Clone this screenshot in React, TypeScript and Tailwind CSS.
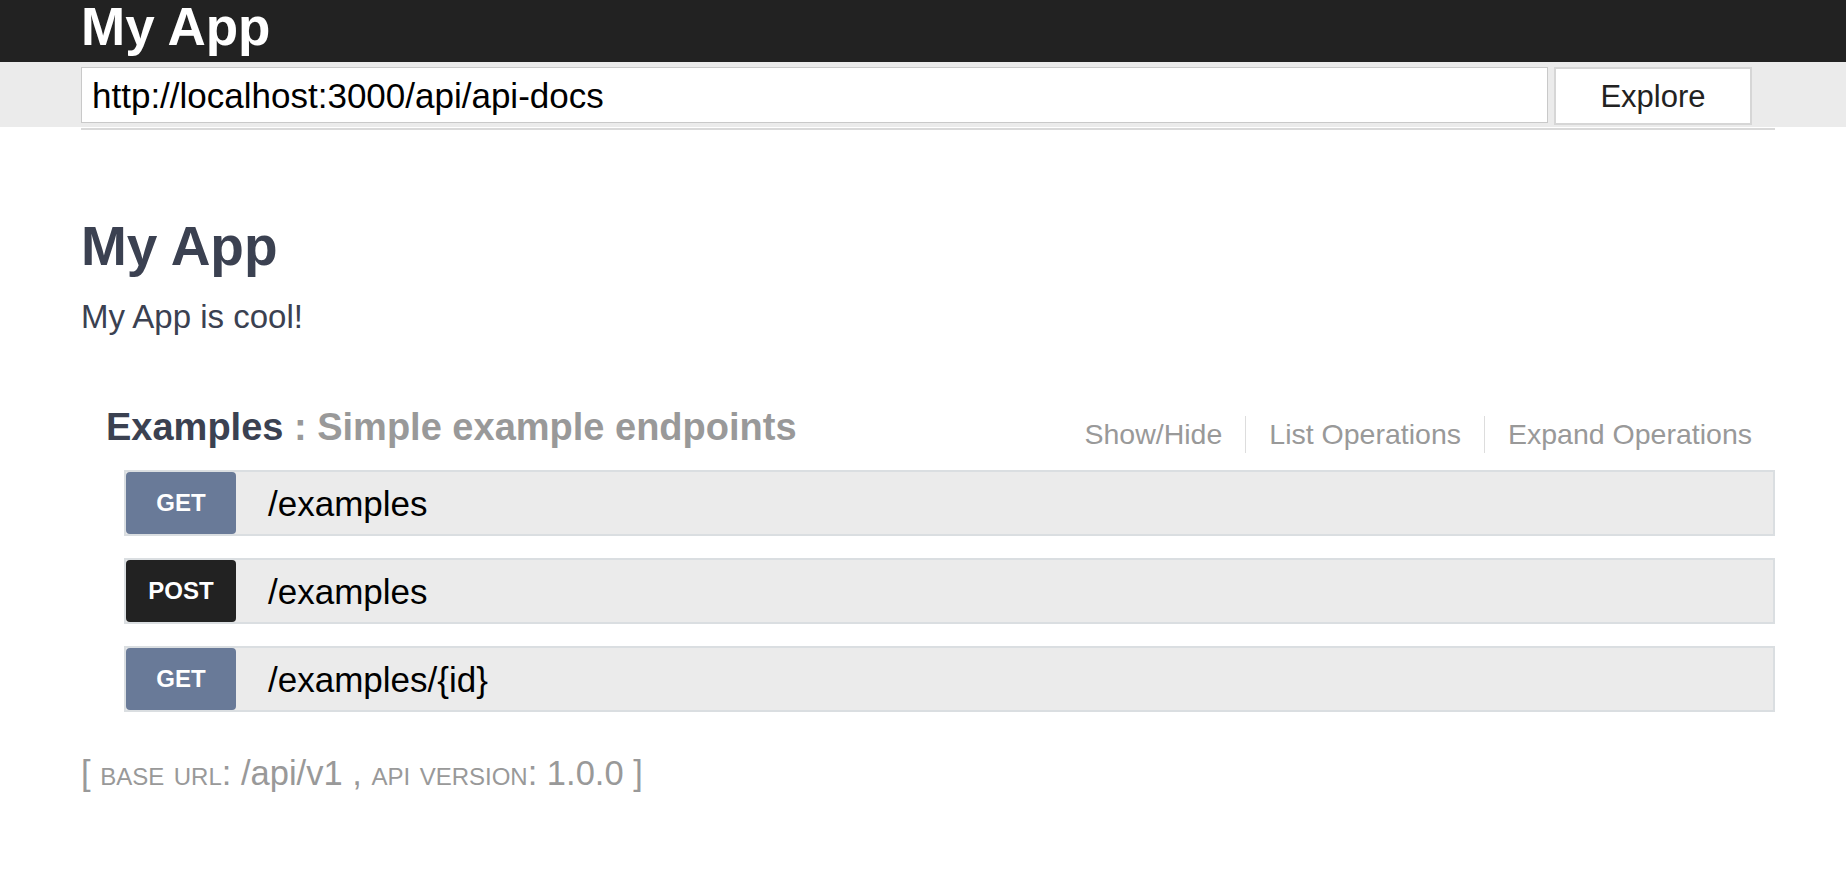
import React from "react";

type Op = { method: "GET" | "POST"; path: string };

const ops: Op[] = [
  { method: "GET", path: "/examples" },
  { method: "POST", path: "/examples" },
  { method: "GET", path: "/examples/{id}" },
];

function Badge({ method }: { method: Op["method"] }) {
  const cls =
    method === "GET"
      ? "bg-[#697a98]"
      : "bg-[#222222]";
  return (
    <div
      className={`flex h-[62px] w-[110px] shrink-0 items-center justify-center rounded-[4px] text-[24px] font-bold leading-none text-white ${cls}`}
    >
      {method}
    </div>
  );
}

export default function App() {
  return (
    <div className="min-h-screen bg-white font-['Liberation_Sans',Arial,Helvetica,sans-serif]">
      <header className="h-[62px] bg-[#222222]">
        <div className="pl-[81px]">
          <span className="block text-[53px] font-bold leading-none text-white">My App</span>
        </div>
      </header>

      <div className="h-[65px] bg-[#ebebeb] pt-[5px]">
        <div className="ml-[81px] flex gap-[6px]">
          <div className="flex h-[56px] w-[1467px] items-center border border-[#c9c9c9] bg-white pl-[10px] text-[35px] leading-none text-black">
            http://localhost:3000/api/api-docs
          </div>
          <button className="h-[58px] w-[198px] border-2 border-[#d6d6d6] bg-white text-[31px] leading-none text-[#222222]">
            Explore
          </button>
        </div>
      </div>
      <div className="ml-[81px] mt-[1px] h-[2px] w-[1694px] bg-[#d9d9d9]" />

      <main className="ml-[81px] w-[1694px]">
        <h1 className="mt-[89px] text-[55px] font-bold leading-none text-[#3b4151]">My App</h1>
        <p className="mt-[26px] text-[33px] leading-none text-[#3b4151]">My App is cool!</p>

        <div className="mt-[75px] flex items-start justify-between">
          <h2 className="pl-[25px] text-[38px] font-bold leading-none text-[#3b4151]">
            Examples <span className="text-[#999999]">: Simple example endpoints</span>
          </h2>
          <ul className="mt-[8px] flex text-[28.5px] leading-none text-[#999999]">
            <li className="flex h-[37px] items-center border-r border-[#dddddd] px-[23px]">Show/Hide</li>
            <li className="flex h-[37px] items-center border-r border-[#dddddd] px-[23px]">List Operations</li>
            <li className="flex h-[37px] items-center px-[23px]">Expand Operations</li>
          </ul>
        </div>

        <div className="mt-[17px] flex flex-col gap-[22px] pl-[43px]">
          {ops.map((op, i) => (
            <div
              key={i}
              className="flex h-[66px] items-center border-2 border-[#dadee1] bg-[#ebebeb]"
            >
              <Badge method={op.method} />
              <span className="ml-[32px] text-[35px] leading-none text-black">{op.path}</span>
            </div>
          ))}
        </div>

        <div className="mt-[44px] text-[34.5px] leading-none text-[#999999]">
          [ <span className="[font-variant:small-caps]">base url</span>: /api/v1 ,{" "}
          <span className="[font-variant:small-caps]">api version</span>: 1.0.0 ]
        </div>
      </main>
    </div>
  );
}
